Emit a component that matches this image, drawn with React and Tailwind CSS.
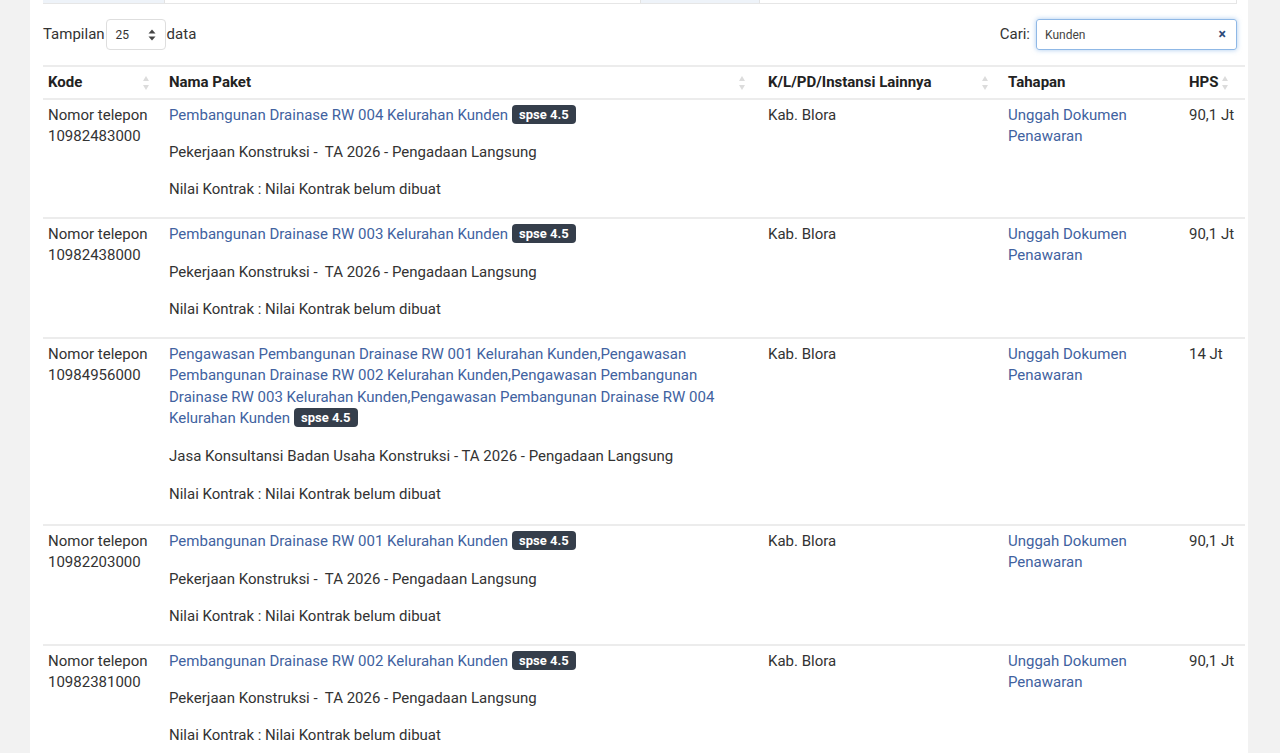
import React from 'react';

const FONT = { fontFamily: 'Roboto, "Noto Sans", "Liberation Sans", sans-serif' };

const rows = [
  {
    kode: '10982483000',
    nama: 'Pembangunan Drainase RW 004 Kelurahan Kunden',
    jenis: 'Pekerjaan Konstruksi -  TA 2026 - Pengadaan Langsung',
    hps: '90,1 Jt',
  },
  {
    kode: '10982438000',
    nama: 'Pembangunan Drainase RW 003 Kelurahan Kunden',
    jenis: 'Pekerjaan Konstruksi -  TA 2026 - Pengadaan Langsung',
    hps: '90,1 Jt',
  },
  {
    kode: '10984956000',
    nama: 'Pengawasan Pembangunan Drainase RW 001 Kelurahan Kunden,Pengawasan Pembangunan Drainase RW 002 Kelurahan Kunden,Pengawasan Pembangunan Drainase RW 003 Kelurahan Kunden,Pengawasan Pembangunan Drainase RW 004 Kelurahan Kunden',
    jenis: 'Jasa Konsultansi Badan Usaha Konstruksi - TA 2026 - Pengadaan Langsung',
    hps: '14 Jt',
    long: true,
  },
  {
    kode: '10982203000',
    nama: 'Pembangunan Drainase RW 001 Kelurahan Kunden',
    jenis: 'Pekerjaan Konstruksi -  TA 2026 - Pengadaan Langsung',
    hps: '90,1 Jt',
  },
  {
    kode: '10982381000',
    nama: 'Pembangunan Drainase RW 002 Kelurahan Kunden',
    jenis: 'Pekerjaan Konstruksi -  TA 2026 - Pengadaan Langsung',
    hps: '90,1 Jt',
  },
];

// little up/down arrows next to sortable headers
const SortIcon = () => (
  <svg width="8" height="18" viewBox="0 0 8 18" className="shrink-0">
    <path d="M4 2 L7 7 H1 Z" fill="#dcdcdc" />
    <path d="M4 16 L7 11 H1 Z" fill="#dcdcdc" />
  </svg>
);

const Badge = () => (
  <span className="inline-block align-[1px] ml-[4px] px-[7px] rounded-[4px] bg-[#353e4b] text-white text-[13px] font-bold leading-[19px]">
    spse 4.5
  </span>
);

export default function App() {
  return (
    <div className="h-[753px] overflow-hidden bg-[#f2f2f2] flex text-[15px] text-[#333]" style={FONT}>
      <div className="ml-[30px] w-[1218px] bg-white pl-[13px] pr-[3px]">
        {/* tab strip remains at the very top */}
        <div className="h-[4px] w-[1194px] flex border-b border-[#e6e6e6] border-r">
          <div className="w-[122px] bg-[#eef3f9] border-r border-[#e3e3e3]" />
          <div className="w-[475px]" />
          <div className="w-[120px] bg-[#eef3f9] border-x border-[#e3e3e3]" />
          <div className="flex-1" />
        </div>

        {/* length + search controls */}
        <div className="h-[61px] w-[1194px] flex items-center justify-between">
          <div className="flex items-center">
            <span>Tampilan</span>
            <div className="ml-[1px] w-[60px] h-[31px] border border-[#dedede] rounded-[4px] flex items-center justify-between pl-[9px] pr-[9px] text-[12px]">
              <span>25</span>
              <svg width="8" height="12" viewBox="0 0 8 12">
                <path d="M4 0.5 L7.5 4.5 H0.5 Z" fill="#444" />
                <path d="M4 11.5 L7.5 7.5 H0.5 Z" fill="#444" />
              </svg>
            </div>
            <span className="ml-[1px]">data</span>
          </div>
          <div className="flex items-center">
            <span>Cari:</span>
            <div className="ml-[6px] w-[201px] h-[31px] border border-[#8fb8e6] rounded-[3px] shadow-[0_0_5px_rgba(102,160,225,0.55)] flex items-center justify-between pl-[8px] pr-[10px] text-[12px]">
              <span className="text-[#444]">Kunden</span>
              <span className="text-[#2f4a7a] font-bold text-[14px]">×</span>
            </div>
          </div>
        </div>

        <table className="table-fixed border-collapse w-[1202px]">
          <colgroup>
            <col className="w-[117px]" />
            <col className="w-[600px]" />
            <col className="w-[240px]" />
            <col className="w-[180px]" />
            <col className="w-[65px]" />
          </colgroup>
          <thead>
            <tr className="border-y-2 border-[#ececec] text-left font-bold text-[#222]">
              <th className="pl-[5px] pr-[10px] h-[33px]">
                <div className="flex items-center justify-between">
                  <span>Kode</span>
                  <SortIcon />
                </div>
              </th>
              <th className="pl-[9px] pr-[14px]">
                <div className="flex items-center justify-between">
                  <span>Nama Paket</span>
                  <SortIcon />
                </div>
              </th>
              <th className="pl-[8px] pr-[11px]">
                <div className="flex items-center justify-between">
                  <span>K/L/PD/Instansi Lainnya</span>
                  <SortIcon />
                </div>
              </th>
              <th className="pl-[8px]">Tahapan</th>
              <th className="pl-[9px]">
                <div className="flex items-center gap-[2px]">
                  <span>HPS</span>
                  <SortIcon />
                </div>
              </th>
            </tr>
          </thead>
          <tbody>
            {rows.map((r) => (
              <tr key={r.kode} className="border-b-2 border-[#ececec] align-top leading-[21px]">
                <td className="pl-[5px] pt-[5px]">
                  Nomor telepon
                  <br />
                  {r.kode}
                </td>
                <td className="pl-[9px] pr-[8px] pt-[5px] pb-[4px]">
                  <div className="leading-[21.4px]">
                    <a className="text-[#4162a0]">{r.nama}</a>
                    <Badge />
                  </div>
                  <p className={`whitespace-pre-wrap ${r.long ? 'mt-[17px]' : 'mt-[16px]'}`}>{r.jenis}</p>
                  <p className={r.long ? 'mt-[17px] mb-[15px]' : 'mt-[16px] mb-[13px]'}>
                    Nilai Kontrak : Nilai Kontrak belum dibuat
                  </p>
                </td>
                <td className="pl-[8px] pt-[5px]">Kab. Blora</td>
                <td className="pl-[8px] pr-[8px] pt-[5px] text-[#4162a0]">Unggah Dokumen Penawaran</td>
                <td className="pl-[9px] pt-[5px]">{r.hps}</td>
              </tr>
            ))}
          </tbody>
        </table>
      </div>
    </div>
  );
}
